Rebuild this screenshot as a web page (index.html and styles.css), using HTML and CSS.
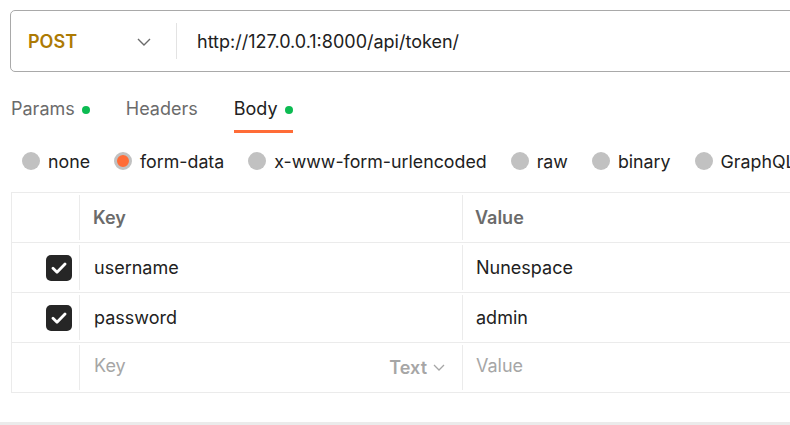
FILE: index.html
```html
<!DOCTYPE html>
<html>
<head>
<meta charset="utf-8">
<link rel="stylesheet" href="styles.css">
</head>
<body>
<div class="page">
  <div class="urlbar">
    <div class="method">
      <span class="method-name">POST</span>
      <svg class="chev" width="14" height="8" viewBox="0 0 14 8"><path d="M1 1l6 6 6-6" fill="none" stroke="#6b6b6b" stroke-width="1.4"/></svg>
    </div>
    <div class="sep"></div>
    <div class="url">http://127.0.0.1:8000/api/token/</div>
  </div>

  <div class="tabs">
    <div class="tab">Params<span class="dot"></span></div>
    <div class="tab">Headers</div>
    <div class="tab active">Body<span class="dot"></span></div>
  </div>

  <div class="radios">
    <div class="radio"><span class="circ"></span>none</div>
    <div class="radio"><span class="circ on"></span>form-data</div>
    <div class="radio"><span class="circ"></span>x-www-form-urlencoded</div>
    <div class="radio"><span class="circ"></span>raw</div>
    <div class="radio"><span class="circ"></span>binary</div>
    <div class="radio"><span class="circ"></span>GraphQL</div>
  </div>

  <div class="table">
    <div class="row head">
      <div class="c1"></div>
      <div class="c2"><span class="hd">Key</span></div>
      <div class="c3"><span class="hd">Value</span></div>
    </div>
    <div class="row">
      <div class="c1"><span class="cb"><svg width="16" height="12" viewBox="0 0 16 12"><path d="M2 6.2l4 4L14 2" fill="none" stroke="#fff" stroke-width="2.8" stroke-linecap="round" stroke-linejoin="round"/></svg></span></div>
      <div class="c2"><span class="txt">username</span></div>
      <div class="c3"><span class="txt val">Nunespace</span></div>
    </div>
    <div class="row">
      <div class="c1"><span class="cb"><svg width="16" height="12" viewBox="0 0 16 12"><path d="M2 6.2l4 4L14 2" fill="none" stroke="#fff" stroke-width="2.8" stroke-linecap="round" stroke-linejoin="round"/></svg></span></div>
      <div class="c2"><span class="txt">password</span></div>
      <div class="c3"><span class="txt val">admin</span></div>
    </div>
    <div class="row last">
      <div class="c1"></div>
      <div class="c2 split"><span class="ph">Key</span><span class="type">Text<svg width="12" height="7" viewBox="0 0 12 7"><path d="M1 1l5 5 5-5" fill="none" stroke="#a6a6a6" stroke-width="1.3"/></svg></span></div>
      <div class="c3"><span class="ph val">Value</span></div>
    </div>
  </div>
  <div class="bottom"></div>
</div>
</body>
</html>
```

FILE: styles.css
```css
html, body {
  margin: 0;
  padding: 0;
  background: #fff;
  overflow: hidden;
}
body {
  font-family: Inter, "Noto Sans", sans-serif;
  color: #212121;
  width: 790px;
  height: 425px;
}
.page {
  height: 425px;
  display: flex;
  flex-direction: column;
}
.urlbar {
  margin: 10px -20px 0 10px;
  height: 60px;
  border: 1px solid #a9a9a9;
  border-radius: 5px;
  display: flex;
  align-items: center;
}
.method {
  width: 165px;
  padding-left: 17px;
  padding-right: 25px;
  box-sizing: border-box;
  display: flex;
  align-items: center;
  justify-content: space-between;
}
.method-name {
  font-weight: 600;
  font-size: 18px;
  color: #ad7a03;
}
.chev { margin-top: 1px; }
.sep {
  width: 1px;
  height: 36px;
  background: #e3e3e3;
}
.url {
  padding-left: 20px;
  font-size: 18px;
  color: #212121;
}
.tabs {
  display: flex;
  gap: 36px;
  margin: 24px 0 0 11px;
  height: 37px;
}
.tab {
  font-size: 18px;
  color: #6b6b6b;
  display: flex;
  align-items: flex-start;
  height: 37px;
  box-sizing: border-box;
  line-height: 26px;
}
.tab.active {
  color: #212121;
  border-bottom: 3px solid #ff6c37;
}
.dot {
  width: 8px;
  height: 8px;
  border-radius: 50%;
  background: #0cbb52;
  margin-left: 7px;
  margin-top: 10px;
}
.radios {
  display: flex;
  gap: 24px;
  margin: 15px 0 0 22px;
  height: 26px;
  align-items: center;
  white-space: nowrap;
}
.radio {
  display: flex;
  align-items: center;
  font-size: 17.8px;
  color: #212121;
}
.circ {
  width: 18px;
  height: 18px;
  border-radius: 50%;
  background: #c1c1c1;
  margin-right: 8px;
  box-sizing: border-box;
  flex: none;
}
.circ.on {
  background: #ff6c37;
  border: 3px solid #c1c1c1;
}
.table {
  margin: 18px -20px 0 11px;
  border: 1px solid #ebebeb;
  border-right: none;
}
.row {
  display: flex;
  height: 49px;
  border-bottom: 1px solid #ebebeb;
}
.row.last { border-bottom: none; }
.row.last .c2, .row.last .c3 { padding-bottom: 5px; }
.c1 {
  width: 68px;
  display: flex;
  align-items: center;
  justify-content: flex-end;
  padding-right: 7px;
  box-sizing: border-box;
  border-right: 1px solid #ebebeb;
  margin: 2px 0;
}
.c2 {
  width: 383px;
  box-sizing: border-box;
  border-right: 1px solid #ebebeb;
  margin: 2px 0;
  display: flex;
  align-items: center;
  padding-left: 13px;
}
.c3 {
  flex: 1;
  display: flex;
  align-items: center;
  padding-left: 12px;
}
.hd {
  font-weight: 600;
  font-size: 18px;
  color: #6b6b6b;
}
.txt {
  font-size: 18px;
  color: #212121;
  padding-left: 1px;
}
.ph {
  font-size: 18px;
  color: #a6a6a6;
  padding-left: 1px;
}
.c2.split {
  justify-content: space-between;
  padding-right: 17px;
}
.type {
  font-weight: 600;
  font-size: 18px;
  color: #a6a6a6;
  display: flex;
  align-items: center;
  gap: 6px;
  padding-top: 4px;
}
.cb {
  width: 26px;
  height: 26px;
  border-radius: 5px;
  background: #262626;
  display: flex;
  align-items: center;
  justify-content: center;
}
.bottom {
  margin-top: auto;
  height: 3px;
  background: #ebebeb;
}
```
